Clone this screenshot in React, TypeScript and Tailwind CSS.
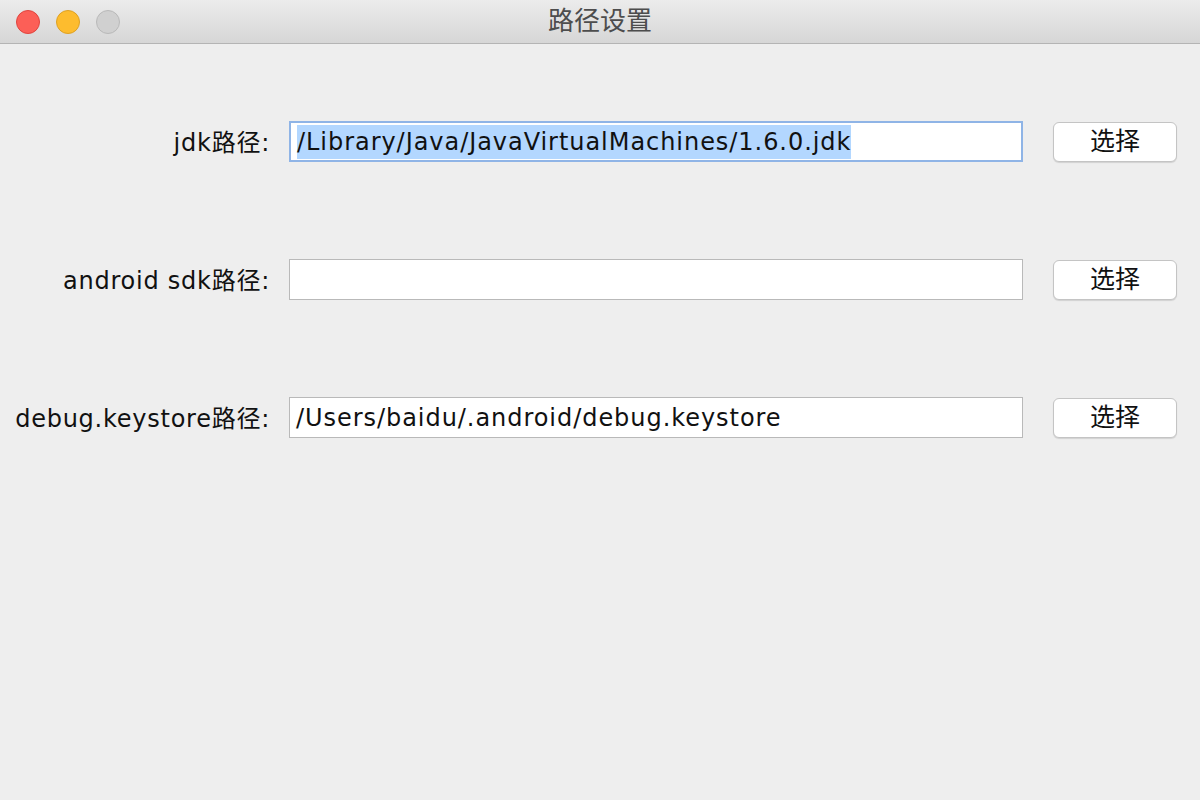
import React from "react";

const font = { fontFamily: '"DejaVu Sans", "Noto Sans CJK SC", sans-serif' };

function Row({ label, value, focused }: { label: string; value: string; focused?: boolean }) {
  return (
    <div className="flex items-center h-[41px]">
      <div className="w-[272px] text-right text-[24px] tracking-[0.75px] text-[#111] pr-[2px] pt-[2px]">{label}</div>
      <div
        className={`ml-[17px] w-[734px] h-[41px] bg-white flex items-center px-[6px] pt-[1px] text-[24px] tracking-[0.95px] text-[#111] ${
          focused ? "border-2 border-[#8fb4e6]" : "border border-[#b9b9b9]"
        }`}
      >
        {focused ? <span className="bg-[#b3d7ff] leading-[34px]">{value}</span> : <span>{value}</span>}
      </div>
      <button className="ml-[30px] w-[124px] h-[40px] bg-white border border-[#c4c4c4] rounded-[6px] shadow-[0_1px_1px_rgba(0,0,0,0.12)] text-[25px] text-[#111]">
        选择
      </button>
    </div>
  );
}

export default function App() {
  return (
    <div className="w-[1200px] h-[800px] bg-[#eeeeee] flex flex-col" style={font}>
      {/* 标题栏 */}
      <div className="h-[44px] bg-gradient-to-b from-[#ececec] to-[#d6d6d6] border-b border-[#b4b4b4] flex items-center relative">
        <div className="flex gap-[16px] pl-[16px]">
          <div className="w-[24px] h-[24px] rounded-full bg-[#fc5f57] border border-[#e0443e]" />
          <div className="w-[24px] h-[24px] rounded-full bg-[#fdbc2e] border border-[#dea123]" />
          <div className="w-[24px] h-[24px] rounded-full bg-[#d0d0d0] border border-[#b9b9b9]" />
        </div>
        <div className="absolute inset-0 flex items-center justify-center text-[26px] text-[#4d4d4d]">路径设置</div>
      </div>
      <div className="flex flex-col gap-[97px] pt-[77px]">
        <Row label="jdk路径:" value="/Library/Java/JavaVirtualMachines/1.6.0.jdk" focused />
        <Row label="android sdk路径:" value="" />
        <Row label="debug.keystore路径:" value="/Users/baidu/.android/debug.keystore" />
      </div>
    </div>
  );
}
